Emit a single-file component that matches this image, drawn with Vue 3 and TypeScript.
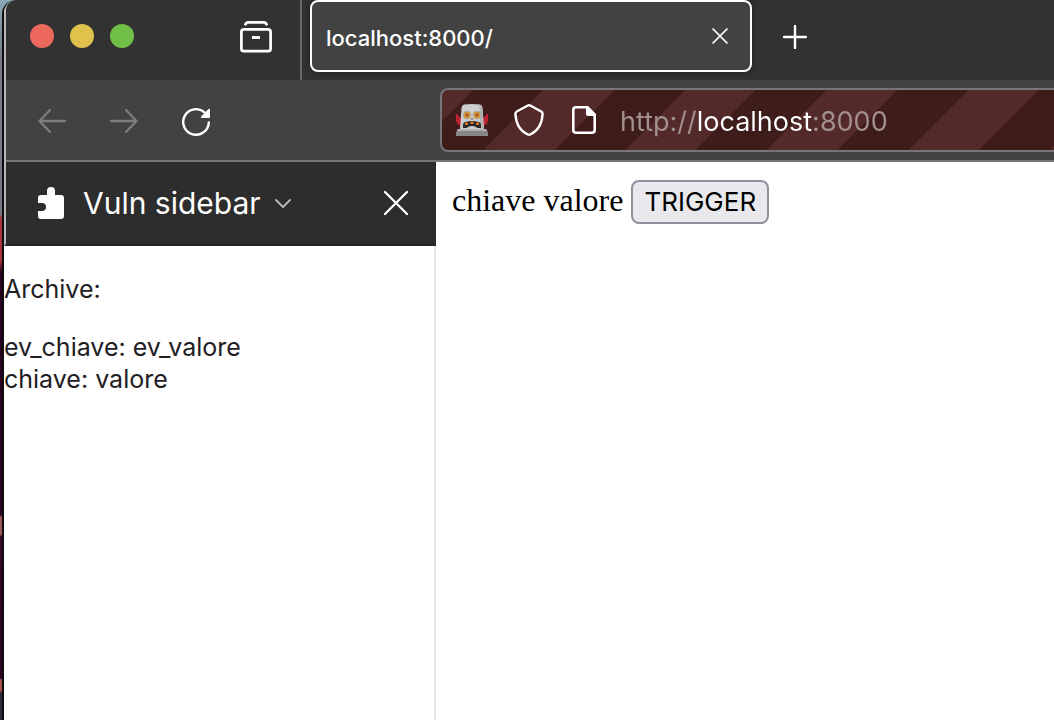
<script setup lang="ts">
import { ref } from 'vue'

interface Entry {
  key: string
  value: string
}

const tabTitle = ref('localhost:8000/')
const address = ref('http://localhost:8000')
const archive = ref<Entry[]>([
  { key: 'ev_chiave', value: 'ev_valore' },
  { key: 'chiave', value: 'valore' },
])
</script>

<template>
  <div class="desktop">
    <div class="window">
      <header class="chrome">
        <div class="tabbar">
          <div class="lights">
            <button class="light red" aria-label="Close window"></button>
            <button class="light yellow" aria-label="Minimize window"></button>
            <button class="light green" aria-label="Zoom window"></button>
          </div>
          <button class="icon view" aria-label="Firefox View">
            <svg width="32" height="32" viewBox="0 0 32 32" fill="none" stroke="#fff" stroke-linecap="round">
              <path d="M5.500 3.300C6 2 7 1.300 8.500 1.300h15c1.500 0 2.500.7 3 2" stroke-width="2.700" />
              <rect x="1.400" y="8.400" width="29.200" height="21.800" rx="2.500" stroke-width="2.700" />
              <path d="M12 16.500h8" stroke-width="2.800" stroke-linecap="butt" />
            </svg>
          </button>
          <div class="tab">
            <button class="tab-title">{{ tabTitle }}</button>
            <button class="icon" aria-label="Close tab">
              <svg width="16" height="16" viewBox="0 0 16 16" stroke="#fff" stroke-width="1.700" stroke-linecap="round">
                <path d="M1 1l14 14M15 1L1 15" />
              </svg>
            </button>
          </div>
          <button class="icon new-tab" aria-label="New tab">
            <svg width="24" height="24" viewBox="0 0 24 24" stroke="#fff" stroke-width="2.400" stroke-linecap="round">
              <path d="M12 1v22M1 12h22" />
            </svg>
          </button>
        </div>
        <div class="toolbar">
          <nav class="nav">
            <button class="icon" aria-label="Back" disabled>
              <svg width="28" height="24" viewBox="0 0 28 24" fill="none" stroke="#7d7d7d" stroke-width="2.300" stroke-linecap="round" stroke-linejoin="round">
                <path d="M12 1L1.500 12 12 23M1.500 12H27" />
              </svg>
            </button>
            <button class="icon" aria-label="Forward" disabled>
              <svg width="28" height="24" viewBox="0 0 28 24" fill="none" stroke="#7d7d7d" stroke-width="2.300" stroke-linecap="round" stroke-linejoin="round">
                <path d="M16 1l10.500 11L16 23M26.500 12H1" />
              </svg>
            </button>
            <button class="icon" aria-label="Reload">
              <svg width="28" height="30" viewBox="0 -2 28 30" fill="none">
                <path d="M26.800 14.500A12.800 12.800 0 1 1 22.500 4.400" stroke="#fff" stroke-width="2.400" stroke-linecap="round" />
                <path d="M28 1.500V9q0 1-1 1h-7.300q-1.500-.3-.5-1.500l7.300-7.500q1.300-.8 1.500.5z" fill="#fff" />
              </svg>
            </button>
          </nav>
          <div class="urlbar">
            <svg class="robot" width="32" height="32" viewBox="0 0 32 32">
              <path d="M0 10q1.500-1 2 1.500L5 14v8q-4-1-5-5zM32 10q-1.500-1-2 1.500L27 14v8q4-1 5-5z" fill="#c01f34" />
              <path d="M8 .5q8-1 16 0Q26 1 26.500 4L28 26H4L5.500 4Q6 1 8 .5z" fill="#cfcece" />
              <path d="M23 .4q3 0 3.500 3.600L28 26h-3z" fill="#b3b2b3" />
              <path d="M2 25h28q1.500 1 2 4v3H0v-3q.5-3 2-4z" fill="#868686" />
              <path d="M2 25h28l1 2H1z" fill="#b0b0b0" />
              <circle cx="11" cy="11" r="4.300" fill="#aaa9a3" />
              <circle cx="21" cy="11" r="4.300" fill="#aaa9a3" />
              <circle cx="11" cy="11" r="3.200" fill="#d68e2e" />
              <circle cx="21" cy="11" r="3.200" fill="#d68e2e" />
              <circle cx="11" cy="11" r="1.200" fill="#76543a" />
              <circle cx="21" cy="11" r="1.200" fill="#76543a" />
              <path d="M16 13l1.500 3h-3z" fill="#8b8989" />
              <path d="M9 18q7-2 14 0 2 .5 2 3v3h-4q-1-2-5-2t-5 2H7v-3q0-2.500 2-3z" fill="#29282b" />
              <path d="M9 18.500h3v2.500H9zM14.500 17.500h3V20h-3zM20 18.500h3v2.500h-3z" fill="#dc7520" />
            </svg>
            <button class="icon" aria-label="Tracking protection">
              <svg width="30" height="32" viewBox="0 0 30 32" fill="none" stroke="#fff" stroke-width="2.400" stroke-linejoin="round">
                <path d="M13.800 1.500q1.200-.6 2.400 0l11 6q1.500.8 1.400 2.500C28 20 24 27 16.200 30.500q-1.200.5-2.400 0C6 27 2 20 1.400 10q-.1-1.700 1.400-2.500z" />
              </svg>
            </button>
            <button class="icon" aria-label="Site information">
              <svg width="24" height="28" viewBox="0 0 24 28" fill="none">
                <path d="M4 1.300h11.500l7.200 7.200V24q0 2.700-2.700 2.700H4q-2.700 0-2.700-2.700V4q0-2.700 2.700-2.700z" stroke="#fff" stroke-width="2.600" />
                <path d="M14 1h2l7 7v2h-7q-2 0-2-2z" fill="#fff" />
              </svg>
            </button>
            <input v-model="address" class="address" type="text" aria-label="Address" spellcheck="false" />
          </div>
        </div>
      </header>
      <div class="content">
        <aside class="sidebar">
          <div class="sidebar-head">
            <button class="sidebar-title">
              <svg width="28" height="32" viewBox="0 0 28 32" fill="#fff">
                <path d="M10 8V4a4 4 0 0 1 8 0v4h6q3 0 3 3v18q0 3-3 3H4q-3 0-3-3v-5h4a4 4 0 0 0 0-8H1v-5q0-3 3-3z" />
              </svg>
              <span>Vuln sidebar</span>
              <svg class="chevron" width="18" height="12" viewBox="0 0 18 12" fill="none" stroke="#b9b9b9" stroke-width="1.800" stroke-linecap="round" stroke-linejoin="round">
                <path d="M2 3l7 7 7-7" />
              </svg>
            </button>
            <button class="icon" aria-label="Close sidebar">
              <svg width="26" height="26" viewBox="0 0 26 26" stroke="#fff" stroke-width="2.300" stroke-linecap="round">
                <path d="M2 2l22 22M24 2L2 24" />
              </svg>
            </button>
          </div>
          <div class="archive">
            <p>Archive:</p>
            <div v-for="entry in archive" :key="entry.key">{{ entry.key }}: {{ entry.value }}</div>
          </div>
        </aside>
        <main class="page">
          chiave valore
          <button class="trigger">TRIGGER</button>
        </main>
      </div>
    </div>
  </div>
</template>

<style>
body {
  margin: 0;
}
</style>

<style scoped>
.desktop {
  box-sizing: border-box;
  min-height: 100vh;
  padding-left: 2px;
  display: flex;
  overflow: hidden;
  background: linear-gradient(
    #8aa7b5 0,
    #747b83 60px,
    #747b83 214px,
    #a8353d 218px,
    #a8353d 260px,
    #2b0322 272px,
    #2b0322 515px,
    #99565c 517px,
    #99565c 534px,
    #3a0525 537px,
    #2b0322 678px,
    #a8544c 680px,
    #a8544c 690px,
    #332b36 693px
  );
  font-family: Inter, "Liberation Sans", sans-serif;
}

.window {
  flex: 1;
  min-width: 0;
  display: flex;
  flex-direction: column;
  border-left: 2px solid #0d0b0e;
  border-top-left-radius: 14px;
  background: #fff;
  overflow: hidden;
}

button {
  padding: 0;
  border: 0;
  background: none;
  color: inherit;
  font: inherit;
}

.icon {
  display: flex;
  flex: none;
}

.chrome {
  border-left: 2px solid #b9b9b9;
  border-top-left-radius: 12px;
  background: #424242;
  color: #fff;
}

.tabbar {
  display: flex;
  height: 80px;
  background: #323232;
  border-top-left-radius: 10px;
}

.lights {
  display: flex;
  gap: 16px;
  padding: 24px 0 0 24px;
}

.light {
  width: 24px;
  height: 24px;
  border-radius: 50%;
}

.red {
  background: #ed695e;
}

.yellow {
  background: #e0c14c;
}

.green {
  background: #72bf47;
}

.view {
  align-items: center;
  padding: 0 28px 6px 106px;
  border-right: 2px solid #696969;
}

.tab {
  box-sizing: border-box;
  display: flex;
  align-items: center;
  justify-content: space-between;
  width: 442px;
  height: 72px;
  margin-left: 8px;
  padding: 0 22px 0 14px;
  border: 2px solid #fff;
  border-radius: 8px;
  background: #424242;
  box-shadow: 0 0 6px rgba(0, 0, 0, 0.4);
}

.tab-title {
  padding-top: 4px;
  font-size: 22px;
  font-weight: 500;
}

.new-tab {
  align-items: center;
  padding: 0 0 6px 31px;
}

.toolbar {
  display: flex;
  align-items: center;
  height: 80px;
  border-bottom: 2px solid #77757c;
}

.nav {
  box-sizing: border-box;
  display: flex;
  align-items: center;
  gap: 44px;
  width: 434px;
  padding: 2px 0 0 32px;
}

.urlbar {
  flex: 1;
  min-width: 0;
  box-sizing: border-box;
  display: flex;
  align-items: center;
  gap: 28px;
  height: 64px;
  padding-left: 14px;
  border: 2px solid #77757c;
  border-right: 0;
  border-radius: 8px 0 0 8px;
  background: repeating-linear-gradient(
    135deg,
    #532a29 0,
    #532a29 22px,
    #3e1c1a 22px,
    #3e1c1a 72px,
    #532a29 72px,
    #532a29 100px
  );
}

.robot {
  flex: none;
  margin-right: -2px;
}

.address {
  flex: 1;
  min-width: 0;
  margin-left: -4px;
  padding: 3px 0 0;
  border: 0;
  outline: 0;
  background: linear-gradient(to right, #a39190 77px, #fff 77px 192px, #a39190 192px);
  background-clip: text;
  color: #fff;
  -webkit-text-fill-color: transparent;
  font-family: inherit;
  font-size: 27px;
  line-height: 40px;
}

.content {
  flex: 1;
  display: flex;
}

.sidebar {
  box-sizing: border-box;
  width: 432px;
}

.sidebar-head {
  box-sizing: border-box;
  display: flex;
  align-items: center;
  justify-content: space-between;
  height: 84px;
  padding: 0 27px 0 31px;
  border-left: 2px solid #b9b9b9;
  border-bottom: 2px solid #262626;
  background: #2d2d2d;
  color: #fff;
}

.sidebar-title {
  display: flex;
  align-items: center;
  gap: 18px;
  font-size: 30px;
}

.chevron {
  margin-left: -5px;
}

.archive {
  box-sizing: border-box;
  min-height: calc(100% - 84px);
  padding-top: 27px;
  border-right: 2px solid #e3e3e3;
  color: #1f2023;
  font-size: 25px;
  line-height: 32px;
}

.archive p {
  margin: 0 0 26px;
}

.page {
  flex: 1;
  padding: 16px;
  color: #000;
  font-family: "Liberation Serif", serif;
  font-size: 32px;
  line-height: 44px;
}

.trigger {
  box-sizing: border-box;
  height: 44px;
  padding: 0 11px;
  border: 2px solid #8f8f9d;
  border-radius: 8px;
  background: #e9e9ed;
  font-family: Inter, "Liberation Sans", sans-serif;
  font-size: 26px;
  line-height: 40px;
}
</style>
